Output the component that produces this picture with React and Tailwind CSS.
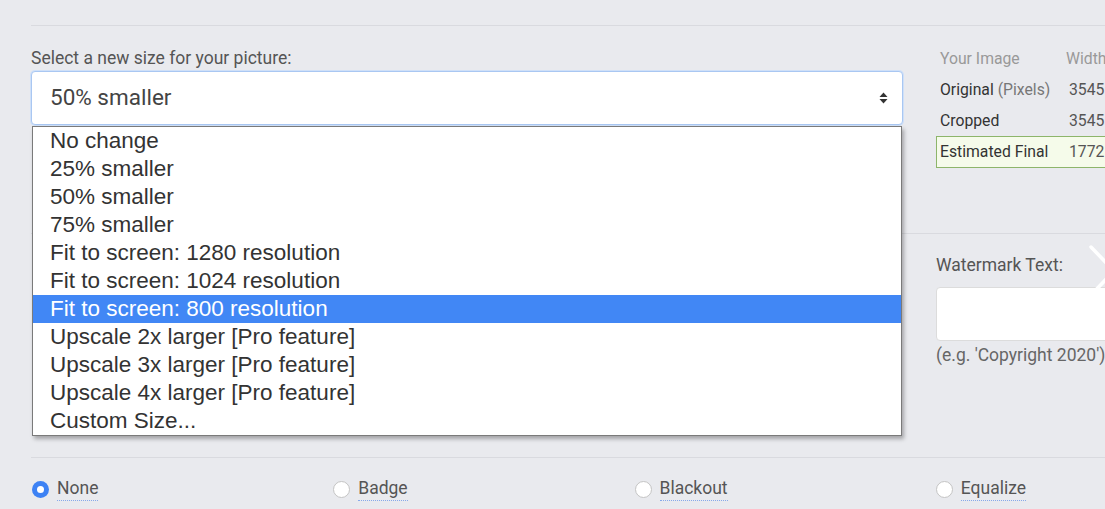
import React, { useState } from "react";

const sizeOptions = [
  "No change",
  "25% smaller",
  "50% smaller",
  "75% smaller",
  "Fit to screen: 1280 resolution",
  "Fit to screen: 1024 resolution",
  "Fit to screen: 800 resolution",
  "Upscale 2x larger [Pro feature]",
  "Upscale 3x larger [Pro feature]",
  "Upscale 4x larger [Pro feature]",
  "Custom Size...",
];

const effects = ["None", "Badge", "Blackout", "Equalize"];

const SelectArrows = () => (
  <svg width="9" height="12" viewBox="0 0 9 12" className="text-[#333]">
    <path d="M4.5 0.5 L8.5 5 L0.5 5 Z" fill="currentColor" />
    <path d="M4.5 11.5 L8.5 7 L0.5 7 Z" fill="currentColor" />
  </svg>
);

const SizeSelect = ({ value }) => {
  const hovered = "Fit to screen: 800 resolution";
  return (
    <div className="relative">
      <div className="flex h-[54px] items-center justify-between rounded-[4px] border border-[#a9c7f2] bg-white pl-[18px] pr-[14px] shadow-[0_0_0_1px_#cfe0f8] text-[22.5px] text-[#444] font-['Roboto',sans-serif]">
        <span>{value}</span>
        <SelectArrows />
      </div>
      {/* native-looking option list, open */}
      <div className="absolute left-[1px] right-[1px] top-[55px] z-10 border border-[#7a7a7a] bg-white shadow-[2px_3px_4px_rgba(0,0,0,0.3)] font-['Liberation_Sans',Arial,sans-serif] text-[22.5px] leading-[28px] text-[#333]">
        {sizeOptions.map((opt) => (
          <div
            key={opt}
            className={
              opt === hovered
                ? "h-[28px] bg-[#4187f5] pl-[17px] text-white"
                : "h-[28px] pl-[17px]"
            }
          >
            {opt}
          </div>
        ))}
      </div>
    </div>
  );
};

const DimensionTable = () => (
  <div className="pt-[17px] text-[15.75px] text-[#333] font-['Roboto',sans-serif]">
    <div className="grid h-[31px] grid-cols-[126px_1fr] items-center px-[4px] text-[#999]">
      <span>Your Image</span>
      <span>Width</span>
    </div>
    <div className="grid h-[31px] grid-cols-[126px_1fr] items-center px-[4px]">
      <span>
        Original <span className="text-[#777]">(Pixels)</span>
      </span>
      <span className="pl-[3px] text-[#555]">3545</span>
    </div>
    <div className="grid h-[31px] grid-cols-[126px_1fr] items-center px-[4px]">
      <span>Cropped</span>
      <span className="pl-[3px] text-[#555]">3545</span>
    </div>
    <div className="grid h-[32px] grid-cols-[126px_1fr] items-center border border-[#8db56a] bg-[#f5fbea] px-[3px]">
      <span>Estimated Final</span>
      <span className="pl-[3px] text-[#555]">1772</span>
    </div>
  </div>
);

const Radio = ({ checked }) =>
  checked ? (
    <span className="flex h-[17px] w-[17px] shrink-0 items-center justify-center rounded-full bg-[#3d82f4]">
      <span className="h-[7px] w-[7px] rounded-full bg-white" />
    </span>
  ) : (
    <span className="h-[17px] w-[17px] shrink-0 rounded-full border border-[#c4c4c4] bg-white" />
  );

export default function App() {
  const [effect, setEffect] = useState("None");

  return (
    <div className="relative h-[509px] w-[1105px] overflow-hidden bg-[#e9eaee] font-['Roboto',sans-serif]">
      <div className="w-[1240px] pl-[31px] pt-[25px]">
        {/* resize row */}
        <div className="grid h-[208px] grid-cols-[872px_1fr] gap-x-[33px] border-t border-[#d9dadf]">
          <div className="pt-[22px]">
            <label className="mb-[3px] block text-[17.5px] leading-[20px] text-[#555]">
              Select a new size for your picture:
            </label>
            <SizeSelect value="50% smaller" />
          </div>
          <DimensionTable />
        </div>

        {/* watermark row */}
        <div className="grid h-[224px] grid-cols-[872px_1fr] gap-x-[33px] border-t border-[#d9dadf]">
          <div />
          <div className="pt-[21px]">
            <div className="mb-[12px] text-[17.5px] leading-[20px] text-[#555]">Watermark Text:</div>
            <div className="h-[54px] w-[260px] rounded-[4px] border border-[#dcdcdc] bg-white" />
            <div className="mt-[4px] text-[17.5px] leading-[20px] text-[#666]">(e.g. 'Copyright 2020')</div>
          </div>
        </div>

        {/* effect row */}
        <div className="grid grid-cols-4 border-t border-[#d9dadf] pt-[20px] pr-[4px]">
          {effects.map((e) => (
            <button
              key={e}
              onClick={() => setEffect(e)}
              className="flex items-center gap-[8px] pl-[1px] text-left"
            >
              <Radio checked={effect === e} />
              <span className="border-b border-dotted border-[#87a9ea] pb-[2px] text-[17.5px] leading-[20px] text-[#555]">
                {e}
              </span>
            </button>
          ))}
        </div>
      </div>

      {/* carousel arrow peeking in from the right */}
      <svg
        className="absolute left-[1088px] top-[244px]"
        width="30"
        height="54"
        viewBox="0 0 30 54"
      >
        <path
          d="M3 3 L26 27 L3 51"
          fill="none"
          stroke="#ffffff"
          strokeWidth="3.5"
          strokeLinecap="round"
          strokeLinejoin="round"
        />
      </svg>
    </div>
  );
}
